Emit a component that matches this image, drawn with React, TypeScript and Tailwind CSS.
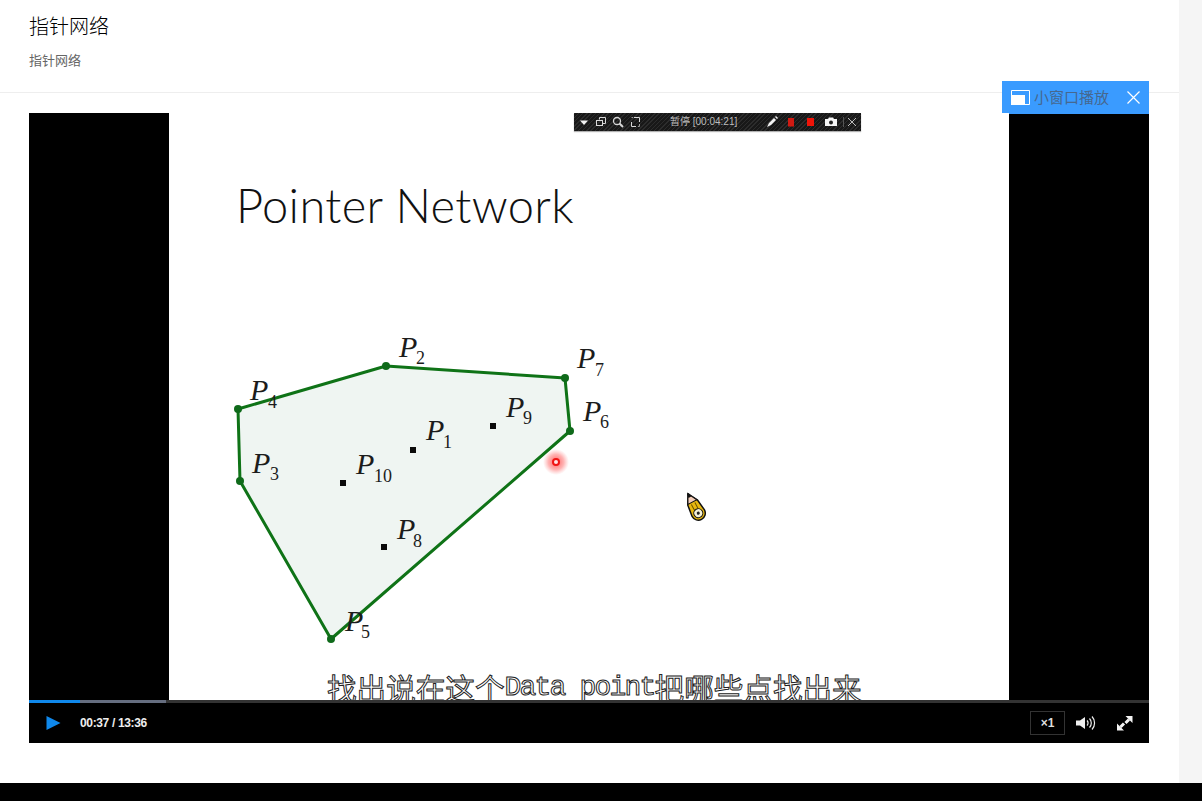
const hull = '238,409 386,366 565,378 570,431 331,639 240,481';
const hullDots = [[238, 409], [386, 366], [565, 378], [570, 431], [331, 639], [240, 481]];
const innerDots = [[413, 450], [493, 426], [343, 483], [384, 547]];

const labels = [
  { sub: '1', x: 426, y: 440, sx: 443, sy: 448 },
  { sub: '2', x: 399, y: 357, sx: 416, sy: 364 },
  { sub: '3', x: 252, y: 473, sx: 270, sy: 480 },
  { sub: '4', x: 250, y: 400, sx: 268, sy: 408 },
  { sub: '5', x: 345, y: 631, sx: 361, sy: 638 },
  { sub: '6', x: 583, y: 421, sx: 600, sy: 428 },
  { sub: '7', x: 577, y: 368, sx: 595, sy: 376 },
  { sub: '8', x: 397, y: 539, sx: 413, sy: 547 },
  { sub: '9', x: 506, y: 417, sx: 523, sy: 424 },
  { sub: '10', x: 356, y: 474, sx: 374, sy: 482 },
];

function Diagram() {
  return (
    <svg className="absolute inset-0" width="840" height="587" viewBox="169 113 840 587">
      <defs>
        <radialGradient id="glow">
          <stop offset="0%" stopColor="#ff3030" stopOpacity="0.8" />
          <stop offset="60%" stopColor="#ff5a5a" stopOpacity="0.45" />
          <stop offset="100%" stopColor="#ff8080" stopOpacity="0" />
        </radialGradient>
      </defs>
      <polygon points={hull} fill="#eff5f2" stroke="#0f7317" strokeWidth="3" strokeLinejoin="round" />
      {hullDots.map(([x, y]) => (
        <circle key={x} cx={x} cy={y} r="4" fill="#0f6a1a" />
      ))}
      {innerDots.map(([x, y]) => (
        <rect key={x} x={x - 3} y={y - 3} width="6" height="6" fill="#0a0a0a" />
      ))}
      {labels.map((l) => (
        <g key={l.sub} fill="#1c1c1c" fontFamily="'Liberation Serif', serif">
          <text x={l.x} y={l.y} fontSize="30" fontStyle="italic">P</text>
          <text x={l.sx} y={l.sy} fontSize="18">{l.sub}</text>
        </g>
      ))}
      <circle cx="556" cy="462" r="13" fill="url(#glow)" />
      <circle cx="556" cy="462" r="3" fill="#ffe3e3" stroke="#f01414" strokeWidth="2" />
      {/* pencil cursor */}
      <g transform="translate(695 507) rotate(-28)">
        <path d="M0 -15 L-5.5 -5 L-7 7 A7 7 0 0 0 7 7 L5.5 -5 Z" fill="#e8b810" stroke="#111" strokeWidth="1.5" />
        <path d="M0 -15 L-5 -5.5 L5 -5.5 Z" fill="#f3cdb8" stroke="#111" strokeWidth="1" />
        <path d="M-1 -15 L1 -15 L1.5 -11 L-1.5 -11 Z" fill="#111" />
        <path d="M-2 -4 V3 M2 -4 V3" stroke="#6b5200" strokeWidth="1" />
        <circle cx="0" cy="7" r="4.5" fill="#f4f1d8" stroke="#111" strokeWidth="1" />
        <circle cx="0" cy="7" r="1.5" fill="#222" />
      </g>
    </svg>
  );
}

function RecorderBar() {
  return (
    <div className="absolute left-[405px] top-0 flex h-[18px] w-[287px] items-center bg-[#1d1d1d] bg-[repeating-linear-gradient(135deg,#2c2c2c_0px,#2c2c2c_1px,#181818_1px,#181818_3px)] shadow-[0_1px_1px_rgba(0,0,0,0.3)]">
      <svg width="287" height="18" viewBox="0 0 287 18" className="absolute inset-0">
        <path d="M6 7.5H14L10 12Z" fill="#f2f2f2" />
        <g fill="none" stroke="#d8d8d8" strokeWidth="1">
          <path d="M25.5 6.5V4.5H31.5V10.5H29" />
          <rect x="22.5" y="7.5" width="6" height="5" />
          <circle cx="43" cy="8" r="3.5" strokeWidth="1.3" />
          <path d="M45.5 10.5L49 14" strokeWidth="2" />
          <path d="M57.5 9V13.5H62" />
          <path d="M60 4.5H65.5V9" />
          <path d="M57.5 4.5H59M65.5 11V13.5H64" stroke="#999" />
        </g>
        <path d="M193 14L195 10L200 5L202 7L197 12Z M201 4L202 3L204 5L203 6Z" fill="#f4f4f4" />
        <rect x="214" y="5" width="6" height="8.5" fill="#d11a12" />
        <rect x="233" y="5" width="7" height="8" fill="#f01408" />
        <path d="M251 6H254L255 4.5H259L260 6H263V13H251Z" fill="#f6f6f6" />
        <circle cx="257" cy="9.5" r="2" fill="#222" />
        <path d="M269.5 4V14" stroke="#555" />
        <path d="M274 5L282 13M282 5L274 13" stroke="#bbb" strokeWidth="1" />
      </svg>
      <span className="relative ml-[96px] whitespace-nowrap text-[10px] leading-none text-[#bdbdbd] [font-family:'Liberation_Sans','Noto_Sans_CJK_SC',sans-serif]">
        暂停 [00:04:21]
      </span>
    </div>
  );
}

function MiniPlayButton() {
  return (
    <div className="absolute left-[973px] top-[-32px] flex h-[33px] w-[147px] items-center bg-[#3a9bff] pl-[9px]">
      <svg width="19" height="15" viewBox="0 0 19 15" className="shrink-0">
        <path d="M0.5 5V0.5H18.5V14.5H14" fill="none" stroke="#fff" />
        <rect x="0" y="5" width="14" height="10" fill="#fff" />
      </svg>
      <span className="ml-[4px] whitespace-nowrap text-[15px] leading-none text-[#46688f]">小窗口播放</span>
      <svg width="13" height="13" viewBox="0 0 13 13" className="ml-[18px] shrink-0">
        <path d="M0.5 0.5L12.5 12.5M12.5 0.5L0.5 12.5" stroke="#fff" strokeWidth="1.2" />
      </svg>
    </div>
  );
}

export default function App() {
  return (
    <div className="flex h-[801px] w-[1202px] flex-col overflow-hidden bg-white [font-family:'Liberation_Sans','Noto_Sans_CJK_SC',sans-serif]">
      <div className="flex flex-1">
        <main className="w-[1179px] bg-white">
          <header className="h-[93px] border-b border-[#eeeeee] pl-[29px] pt-[12px]">
            <h1 className="text-[20px] leading-[30px] font-light text-black">指针网络</h1>
            <p className="mt-[9px] text-[13px] leading-[20px] text-[#666666]">指针网络</p>
          </header>

          <section className="relative ml-[29px] mt-[20px] w-[1120px] bg-black">
            <MiniPlayButton />
            <div className="flex h-[587px] justify-center bg-black">
              <div className="relative flex h-full w-[840px] flex-col overflow-hidden bg-white">
                <Diagram />
                <h2 className="relative ml-[67px] mt-[62px] whitespace-nowrap text-[47px] leading-[60px] tracking-[0.33px] font-light text-[#111111] [font-family:Lato,sans-serif]">
                  Pointer Network
                </h2>
                <div className="relative mt-auto mb-[-7px] ml-[158px] flex h-[38px] items-center whitespace-nowrap text-[29.6px] leading-[38px] font-normal text-white [-webkit-text-stroke:1px_#222222] [font-family:'Noto_Sans_CJK_SC',sans-serif]">
                  找出说在这个
                  <span className="w-[150px] text-[28px] tracking-[-1.8px] [font-family:'Liberation_Mono',monospace]">Data point</span>
                  把哪些点找出来
                </div>
                <RecorderBar />
              </div>
            </div>

            <div className="flex h-[3px] bg-[#333333]">
              <div className="w-[51px] bg-[#0f88eb]" />
              <div className="w-[86px] bg-[#666e80]" />
            </div>

            <div className="flex h-[40px] items-center">
              <svg width="16" height="16" viewBox="0 0 16 16" className="ml-[17px] shrink-0">
                <path d="M0.5 1L14.5 8L0.5 15Z" fill="#0f88eb" />
              </svg>
              <span className="ml-[18px] text-[12px] font-bold tracking-[-0.35px] text-[#eeeeee]">00:37 / 13:36</span>
              <div className="ml-auto flex h-[24px] w-[35px] items-center justify-center border border-[#333333] text-[12px] font-bold text-[#dddddd]">
                ×1
              </div>
              <svg width="20" height="16" viewBox="0 0 20 16" className="ml-[11px] shrink-0">
                <path d="M0 5.5H4L9 2V14L4 10.5H0Z" fill="#eeeeee" />
                <g fill="none" stroke="#eeeeee" strokeWidth="1.2">
                  <path d="M11 5.5A3.5 3.5 0 0 1 11 10.5" />
                  <path d="M13.5 3.5A6.5 6.5 0 0 1 13.5 12.5" />
                  <path d="M16 1.5A9.5 9.5 0 0 1 16 14.5" />
                </g>
              </svg>
              <svg width="16" height="15" viewBox="0 0 16 15" className="ml-[21px] mr-[16px] shrink-0">
                <path d="M8.5 0H15.5V7Z M0 14.5V7.5L7 14.5Z" fill="#f4f4f4" />
                <path d="M12 3.5L8.5 7M3.5 11L7 7.5" stroke="#f4f4f4" strokeWidth="3" />
              </svg>
            </div>
          </section>
        </main>
        <aside className="flex-1 bg-[#f5f5f5]" />
      </div>
      <div className="h-[18px] bg-black" />
    </div>
  );
}
